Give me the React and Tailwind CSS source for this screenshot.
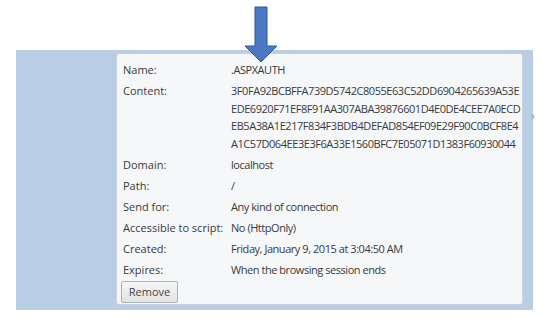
import React from "react";

const rows = [
  { label: "Name:", value: [".ASPXAUTH"] },
  {
    label: "Content:",
    value: [
      "3F0FA92BCBFFA739D5742C8055E63C52DD6904265639A53E",
      "EDE6920F71EF8F91AA307ABA39876601D4E0DE4CEE7A0ECD",
      "EB5A38A1E217F834F3BDB4DEFAD854EF09E29F90C0BCF8E4",
      "A1C57D064EE3E3F6A33E1560BFC7E05071D1383F60930044",
    ],
  },
  { label: "Domain:", value: ["localhost"] },
  { label: "Path:", value: ["/"] },
  { label: "Send for:", value: ["Any kind of connection"] },
  { label: "Accessible to script:", value: ["No (HttpOnly)"] },
  { label: "Created:", value: ["Friday, January 9, 2015 at 3:04:50 AM"] },
  { label: "Expires:", value: ["When the browsing session ends"] },
];

export default function App() {
  return (
    <div
      className="relative w-[558px] h-[319px] bg-white text-[#3a3a3a] overflow-hidden"
      style={{ fontFamily: "'Open Sans', 'Noto Sans', sans-serif" }}
    >
      <div className="pt-[50px] pl-[16px]">
        {/* blue band */}
        <div className="relative w-[517px] h-[260px] bg-[#b9cde5] pt-[3px] pl-[100px] pr-[10px]">
          <div className="h-[252px] bg-[#f5f7f9] border border-[#c9d3de] rounded-[3px] pt-[5.5px] pl-[6px] text-[11px]">
            {rows.map((r) => (
              <div key={r.label} className="flex py-[1.75px]">
                <div className="w-[108px] shrink-0 leading-[17.5px]">{r.label}</div>
                <div>
                  {r.value.map((v) => (
                    <div key={v} className="leading-[17.5px] tracking-[-0.45px]">{v}</div>
                  ))}
                </div>
              </div>
            ))}
            <button className="mt-[1px] -ml-[2px] h-[22px] w-[57px] border border-[#aeb3b8] rounded-[2px] bg-gradient-to-b from-[#f6f6f6] to-[#e2e2e2] text-[11px] text-[#444]">
              Remove
            </button>
          </div>
          <span className="absolute right-[-2px] top-[56px] text-[13px] text-[#8a9aae]">›</span>
        </div>
      </div>

      {/* arrow callout */}
      <svg className="absolute left-[243px] top-[6px]" width="36" height="58" viewBox="0 0 36 58">
        <path
          d="M12 1 H24 V40 H34 L18 56 L2 40 H12 Z"
          fill="#4a78c2"
          stroke="#2f5597"
          strokeWidth="1"
        />
      </svg>
    </div>
  );
}
